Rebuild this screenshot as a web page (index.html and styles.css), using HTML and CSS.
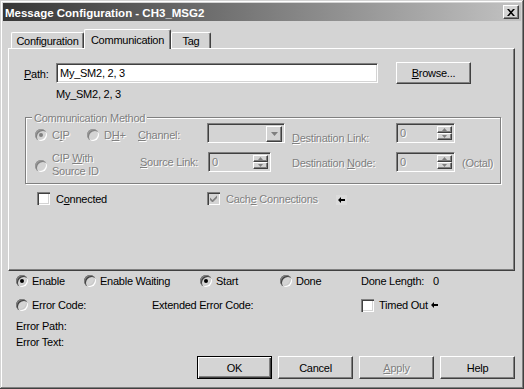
FILE: index.html
```html
<!DOCTYPE html>
<html>
<head>
<meta charset="utf-8">
<link rel="stylesheet" href="styles.css">
</head>
<body>
<div class="window">
  <div class="titlebar">
    <span class="title">Message Configuration - CH3_MSG2</span>
    <span class="close"><svg width="8" height="7" viewBox="0 0 8 7"><path d="M0 0H2L8 7H6Z M6 0H8L2 7H0Z" fill="#000"/></svg></span>
  </div>
  <div class="content">
    <div class="tabs">
      <div class="tab inactive t-config">Configuration</div>
      <div class="tab active t-comm">Communication</div>
      <div class="tab inactive t-tag">Tag</div>
    </div>
    <div class="panel">
      <div class="path-row">
        <span class="path-label"><u>P</u>ath:</span>
        <div class="field path-input">My_SM2, 2, 3</div>
        <button class="btn browse"><u>B</u>rowse...</button>
      </div>
      <div class="resolved">My_SM2, 2, 3</div>
      <div class="group">
        <span class="legend dis">Communication Method</span>
        <div class="grid">
          <div class="cell c1 r1">
            <span class="opt opt-cip"><i class="radio on dis-radio"></i><span class="dis">C<u>I</u>P</span></span>
            <span class="opt"><i class="radio dis-radio"></i><span class="dis">D<u>H</u>+</span></span>
          </div>
          <div class="lbl lbl-ch dis"><u>C</u>hannel:</div>
          <div class="cell">
            <div class="field combo"><span class="combo-btn"><svg width="7" height="4" viewBox="0 0 7 4"><polygon points="0,0 7,0 3.5,4" fill="#808080"/></svg></span></div>
          </div>
          <div class="lbl lbl-dl dis"><u>D</u>estination Link:</div>
          <div class="cell">
            <div class="field spin"><span class="spin-val dis">0</span><span class="spin-btns"><span class="sb"><svg width="5" height="3" viewBox="0 0 5 3"><polygon points="0,3 2.5,0 5,3" fill="#808080"/></svg></span><span class="sb"><svg width="5" height="3" viewBox="0 0 5 3"><polygon points="0,0 5,0 2.5,3" fill="#808080"/></svg></span></span></div>
          </div>
          <div class="cell"></div>

          <div class="cell c1 r2">
            <i class="radio dis-radio"></i><span class="dis two">CIP <u>W</u>ith<br>Source ID</span>
          </div>
          <div class="lbl lbl-sl dis"><u>S</u>ource Link:</div>
          <div class="cell">
            <div class="field spin spin-src"><span class="spin-val dis">0</span><span class="spin-btns"><span class="sb"><svg width="5" height="3" viewBox="0 0 5 3"><polygon points="0,3 2.5,0 5,3" fill="#808080"/></svg></span><span class="sb"><svg width="5" height="3" viewBox="0 0 5 3"><polygon points="0,0 5,0 2.5,3" fill="#808080"/></svg></span></span></div>
          </div>
          <div class="lbl lbl-dn dis">Destination <u>N</u>ode:</div>
          <div class="cell">
            <div class="field spin"><span class="spin-val dis">0</span><span class="spin-btns"><span class="sb"><svg width="5" height="3" viewBox="0 0 5 3"><polygon points="0,3 2.5,0 5,3" fill="#808080"/></svg></span><span class="sb"><svg width="5" height="3" viewBox="0 0 5 3"><polygon points="0,0 5,0 2.5,3" fill="#808080"/></svg></span></span></div>
          </div>
          <div class="lbl lbl-oct dis">(Octal)</div>
        </div>
      </div>
      <div class="conn-row">
        <span class="opt conn"><i class="check"></i><span>C<u>o</u>nnected</span></span>
        <span class="opt cache"><i class="check dis-check"><svg width="7" height="7" viewBox="0 0 7 7"><polygon points="0,2.5 2.5,5 7,0.5 7,3 2.5,7.5 0,5" fill="#808080"/></svg></i><span class="dis">Cach<u>e</u> Connections</span></span>
        <span class="arrow-box"><svg width="7" height="6" viewBox="0 0 7 6"><path d="M0 3L3 0V2H7V4H3V6Z" fill="#000"/></svg></span>
      </div>
    </div>
    <div class="status">
      <div class="srow row1">
        <span class="opt w-enable"><i class="radio on"></i>Enable</span>
        <span class="opt w-wait"><i class="radio"></i>Enable Waiting</span>
        <span class="opt w-start"><i class="radio on"></i>Start</span>
        <span class="opt w-done"><i class="radio"></i>Done</span>
        <span class="opt"><span>Done Length:</span><span class="dl-val">0</span></span>
      </div>
      <div class="srow row2">
        <span class="opt w-err"><i class="radio"></i>Error Code:</span>
        <span class="opt w-ext">Extended Error Code:</span>
        <span class="opt"><i class="check timed"></i><span>Timed Out</span><svg class="arrow2" width="7" height="6" viewBox="0 0 7 6"><path d="M0 3L3 0V2H7V4H3V6Z" fill="#000"/></svg></span>
      </div>
      <div class="srow row3">Error Path:</div>
      <div class="srow row4">Error Text:</div>
      <div class="buttons">
        <button class="btn default">OK</button>
        <button class="btn">Cancel</button>
        <button class="btn"><span class="dis"><u>A</u>pply</span></button>
        <button class="btn">Help</button>
      </div>
    </div>
  </div>
</div>
</body>
</html>
```
FILE: styles.css
```css
* { box-sizing: border-box; }
html, body { margin: 0; padding: 0; }
body {
  background: #d4d4d4;
  font-family: "Liberation Sans", Arial, sans-serif;
  font-size: 11px;
  letter-spacing: -0.25px;
  color: #000;
}
u { text-decoration: underline; text-underline-offset: 1px; }
i { font-style: normal; }

.window {
  width: 524px;
  height: 389px;
  padding: 3px;
  background: #d4d4d4;
  box-shadow: inset -1px -1px 0 #404040, inset 1px 1px 0 #d4d4d4, inset -2px -2px 0 #808080, inset 2px 2px 0 #ffffff;
  display: flex;
  flex-direction: column;
}

.titlebar {
  height: 18px;
  flex: none;
  background: linear-gradient(to right, #363636, #c2c2c2);
  display: flex;
  align-items: center;
  justify-content: space-between;
  padding: 0 2px;
}
.title {
  color: #fff;
  font-weight: bold;
  font-size: 11.5px;
  letter-spacing: 0;
  line-height: 14px;
  padding-top: 1px;
}
.close {
  width: 16px;
  height: 14px;
  background: #d4d4d4;
  border: 1px solid;
  border-color: #fff #404040 #404040 #fff;
  box-shadow: inset -1px -1px 0 #808080;
  display: flex;
  align-items: center;
  justify-content: center;
}

.content {
  flex: 1;
  padding: 8px 6px 0 5px;
  display: flex;
  flex-direction: column;
}

.tabs {
  display: flex;
  align-items: flex-end;
  height: 20px;
  margin-bottom: -1px;
  padding-left: 3px;
  position: relative;
  z-index: 1;
}
.tab {
  background: #d4d4d4;
  border: 1px solid;
  border-bottom: none;
  border-color: #fff #404040 #404040 #fff;
  box-shadow: inset -1px 0 0 #808080;
  border-radius: 2px 2px 0 0;
  text-align: center;
  line-height: 13px;
}
.tab.inactive { height: 16px; margin-bottom: 1px; padding-top: 2px; }
.tab.active { height: 20px; padding-top: 4px; }
.t-config { width: 73px; }
.t-comm { width: 87px; }
.t-tag { width: 40px; }

.panel {
  height: 223px;
  flex: none;
  border: 1px solid;
  border-color: #fff #404040 #404040 #fff;
  box-shadow: inset -1px -1px 0 #808080;
  padding: 13px 0 0 15px;
}

.path-row {
  display: flex;
  align-items: center;
  height: 22px;
}
.path-label { width: 32px; line-height: 14px; padding-top: 2px; }

.field {
  border: 1px solid;
  border-color: #808080 #fff #fff #808080;
  box-shadow: inset 1px 1px 0 #404040, inset -1px -1px 0 #d4d4d4;
}
.path-input {
  width: 322px;
  height: 20px;
  background: #fff;
  padding: 0 3px;
  line-height: 18px;
}

.btn {
  width: 75px;
  height: 23px;
  background: #d4d4d4;
  border: 1px solid;
  border-color: #fff #404040 #404040 #fff;
  box-shadow: inset -1px -1px 0 #808080;
  font: inherit;
  letter-spacing: inherit;
  color: #000;
  padding: 0;
  text-align: center;
}
.btn.default {
  border-color: #000;
  box-shadow: inset 1px 1px 0 #fff, inset -1px -1px 0 #404040, inset -2px -2px 0 #808080;
}
.browse { height: 22px; margin-left: 18px; }

.resolved {
  margin-top: 3px;
  margin-left: 32px;
  line-height: 14px;
}

.dis { color: #808080; text-shadow: 1px 1px 0 #fff; }

.group {
  position: relative;
  margin-top: 16px;
  margin-left: 1px;
  width: 476px;
  height: 67px;
  border: 1px solid #808080;
  box-shadow: 1px 1px 0 #fff, inset 1px 1px 0 #fff;
  padding: 5px 0 0 9px;
}
.legend {
  position: absolute;
  top: -7px;
  left: 6px;
  padding: 0 2px;
  background: #d4d4d4;
  line-height: 14px;
}
.grid {
  display: grid;
  grid-template-columns: 103px 69px 85px 104px 59px auto;
  grid-template-rows: 20px 20px;
  row-gap: 9px;
}
.cell { display: flex; align-items: center; }
.r1 { padding-top: 3px; }
.opt { display: flex; align-items: center; line-height: 14px; }
.opt-cip { width: 52px; }
.opt .radio { margin-right: 5px; }
.r2 { align-self: start; height: 25px; }
.r2 .radio { margin-right: 5px; margin-top: 2px; }
.two { line-height: 12.5px; }
.lbl { line-height: 14px; white-space: nowrap; }
.lbl-ch { padding-top: 5px; }
.lbl-dl { padding-top: 8px; }
.lbl-sl { padding-left: 2px; padding-top: 3px; }
.lbl-dn { padding-top: 4px; }
.lbl-oct { padding-left: 7px; padding-top: 4px; }

.combo {
  width: 78px;
  height: 20px;
  background: #d4d4d4;
  padding: 2px;
  display: flex;
  justify-content: flex-end;
}
.combo-btn {
  width: 16px;
  height: 16px;
  border: 1px solid;
  border-color: #fff #404040 #404040 #fff;
  box-shadow: inset -1px -1px 0 #808080;
  display: flex;
  align-items: center;
  justify-content: center;
}

.spin {
  width: 59px;
  height: 20px;
  background: #d4d4d4;
  padding: 2px 2px 2px 3px;
  display: flex;
  justify-content: space-between;
}
.spin-src { width: 63px; margin-left: 1px; }
.spin-val { line-height: 15px; }
.spin-btns { display: flex; flex-direction: column; width: 15px; }
.sb {
  height: 8px;
  border: 1px solid;
  border-color: #fff #404040 #404040 #fff;
  box-shadow: inset -1px -1px 0 #808080;
  display: flex;
  align-items: center;
  justify-content: center;
}
.sb svg { display: block; }

.radio {
  display: inline-block;
  flex: none;
  width: 12px;
  height: 12px;
  border-radius: 50%;
  background: #d4d4d4;
  box-shadow: inset 1px 1px 0 #808080, inset 2px 2px 0 #404040, inset -1px -1px 0 #fff, inset -2px -2px 0 #c8c8c8;
  position: relative;
}
.radio.on::after {
  content: "";
  position: absolute;
  left: 4px;
  top: 4px;
  width: 4px;
  height: 4px;
  border-radius: 50%;
  background: #000;
}
.dis-radio { box-shadow: inset 1px 1px 0 #9a9a9a, inset 2px 2px 0 #808080, inset -1px -1px 0 #fff, inset -2px -2px 0 #d4d4d4; }
.dis-radio.on::after { background: #808080; }

.check {
  display: inline-flex;
  align-items: center;
  justify-content: center;
  flex: none;
  width: 13px;
  height: 13px;
  background: #fff;
  box-shadow: inset 1px 1px 0 #808080, inset 2px 2px 0 #404040, inset -1px -1px 0 #fff, inset -2px -2px 0 #d4d4d4;
}
.dis-check { background: #d4d4d4; }

.conn-row {
  display: flex;
  align-items: center;
  height: 13px;
  margin-top: 8px;
  margin-left: 13px;
}
.conn { width: 170px; }
.conn .check { margin-right: 6px; }
.cache { width: 129px; }
.cache .check { margin-right: 6px; }
.arrow-box {
  width: 11px;
  height: 10px;
  background: #dcdcdc;
  display: flex;
  align-items: center;
  justify-content: center;
  margin-top: 2px;
}

.status {
  padding-left: 8px;
  display: flex;
  flex-direction: column;
}
.srow { display: flex; align-items: center; height: 14px; line-height: 14px; }
.srow .radio { margin-right: 4px; }
.row1 { margin-top: 3px; }
.row2 { margin-top: 10px; }
.row3 { margin-top: 7px; }
.row4 { margin-top: 2px; }
.w-enable { width: 68px; }
.w-wait { width: 116px; }
.w-start { width: 80px; }
.w-done { width: 81px; }
.dl-val { margin-left: 9px; }
.w-err { width: 136px; }
.w-ext { width: 209px; }
.timed { margin-right: 5px; }
.arrow2 { margin-left: 3px; }

.buttons {
  display: flex;
  justify-content: flex-end;
  gap: 6px;
  margin-top: 7px;
}
```
